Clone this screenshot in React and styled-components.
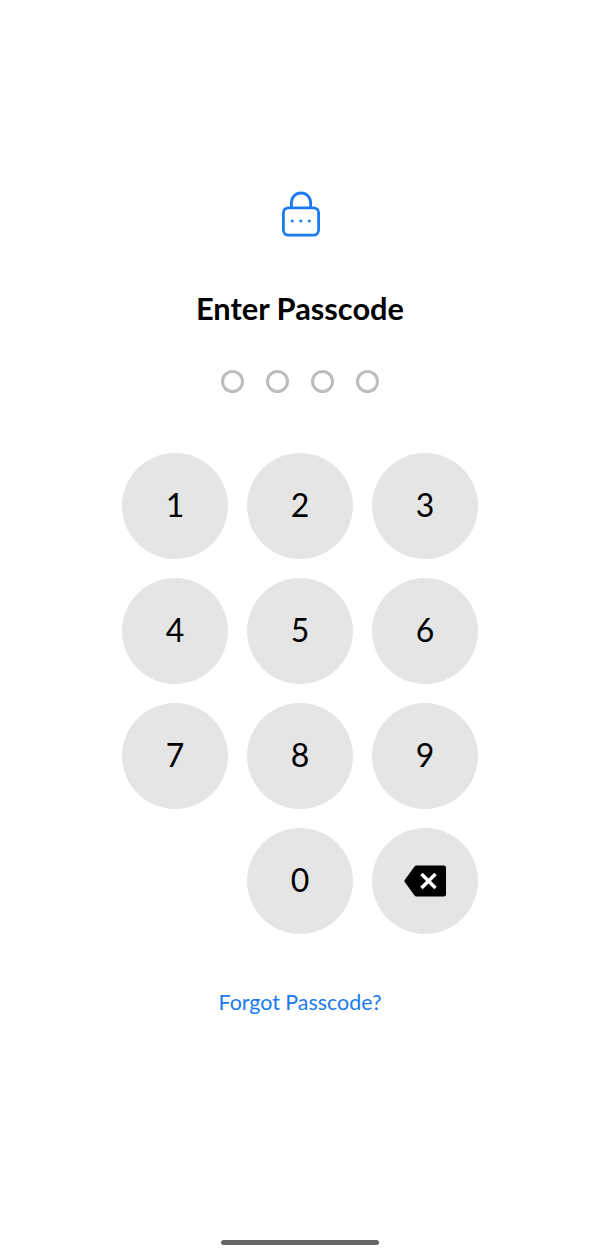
import styled, { createGlobalStyle } from "styled-components";

const GlobalStyle = createGlobalStyle`
  html, body {
    margin: 0;
    padding: 0;
    background: #fff;
    font-family: Lato, "Open Sans", sans-serif;
  }
`;

const Screen = styled.div`
  width: 600px;
  height: 1260px;
  display: flex;
  flex-direction: column;
  align-items: center;
  padding-top: 190px;
  box-sizing: border-box;
  overflow: hidden;
`;

const LockIcon = styled.svg`
  display: block;
  width: 38px;
  height: 48px;
  margin-left: 2px;
  color: #1a7bf0;
`;

const Title = styled.h1`
  margin: 49px 0 0;
  font-size: 30.8px;
  line-height: 44px;
  font-weight: 700;
  color: #000;
`;

const Dots = styled.div`
  display: flex;
  gap: 23px;
  margin: 39px 1px 0 0;
`;

const Dot = styled.span`
  width: 23px;
  height: 23px;
  margin-right: -1px;
  box-sizing: border-box;
  border: 3px solid #bdbdbd;
  border-radius: 50%;
`;

const Keypad = styled.div`
  display: grid;
  grid-template-columns: repeat(3, 106px);
  grid-auto-rows: 106px;
  gap: 19px;
  margin-top: 60px;
`;

const Key = styled.button`
  width: 106px;
  height: 106px;
  padding: 0 0 ${(props) => (props.$icon ? "0" : "4px")};
  border: none;
  border-radius: 50%;
  background: #e5e5e5;
  color: #000;
  font-family: inherit;
  font-size: 32px;
  font-weight: 400;
  display: flex;
  align-items: center;
  justify-content: center;
  grid-column: ${(props) => props.$column || "auto"};
`;

const ForgotLink = styled.a`
  margin-top: 53px;
  font-size: 21.4px;
  line-height: 30px;
  color: #1a7bf0;
  text-decoration: none;
`;

const Spacer = styled.div`
  flex: 1;
`;

const HomeBar = styled.div`
  width: 158px;
  height: 5px;
  margin-bottom: 15px;
  border-radius: 3px;
  background: #666;
`;

const Lock = () => (
  <LockIcon viewBox="0 0 38 48" fill="none">
    <rect x="1.4" y="17.9" width="35.2" height="27.2" rx="5" stroke="currentColor" strokeWidth="2.8" />
    <path d="M9.4 17.9v-5.3a9.6 9.6 0 0 1 19.2 0v5.3" stroke="currentColor" strokeWidth="2.8" />
    <circle cx="10.3" cy="31" r="1.5" fill="currentColor" />
    <circle cx="18.8" cy="31" r="1.5" fill="currentColor" />
    <circle cx="27.3" cy="31" r="1.5" fill="currentColor" />
  </LockIcon>
);

const Backspace = () => (
  <svg width="42" height="32" viewBox="0 0 42 32">
    <path d="M12.5 0.5H40a2 2 0 0 1 2 2v27a2 2 0 0 1-2 2H12.5a2.5 2.5 0 0 1-2-1L0.7 17a2 2 0 0 1 0-2L10.5 1.5a2.5 2.5 0 0 1 2-1z" fill="#000" />
    <path d="M17.5 9l14 14M31.5 9l-14 14" stroke="#fff" strokeWidth="3.5" />
  </svg>
);

const digits = ["1", "2", "3", "4", "5", "6", "7", "8", "9"];

export default function App() {
  return (
    <>
      <GlobalStyle />
      <Screen>
        <Lock />
        <Title>Enter Passcode</Title>
        <Dots>
          {[0, 1, 2, 3].map((i) => (
            <Dot key={i} />
          ))}
        </Dots>
        <Keypad>
          {digits.map((d) => (
            <Key key={d}>{d}</Key>
          ))}
          <Key $column="2">0</Key>
          <Key $icon aria-label="Delete">
            <Backspace />
          </Key>
        </Keypad>
        <ForgotLink href="#">Forgot Passcode?</ForgotLink>
        <Spacer />
        <HomeBar />
      </Screen>
    </>
  );
}
